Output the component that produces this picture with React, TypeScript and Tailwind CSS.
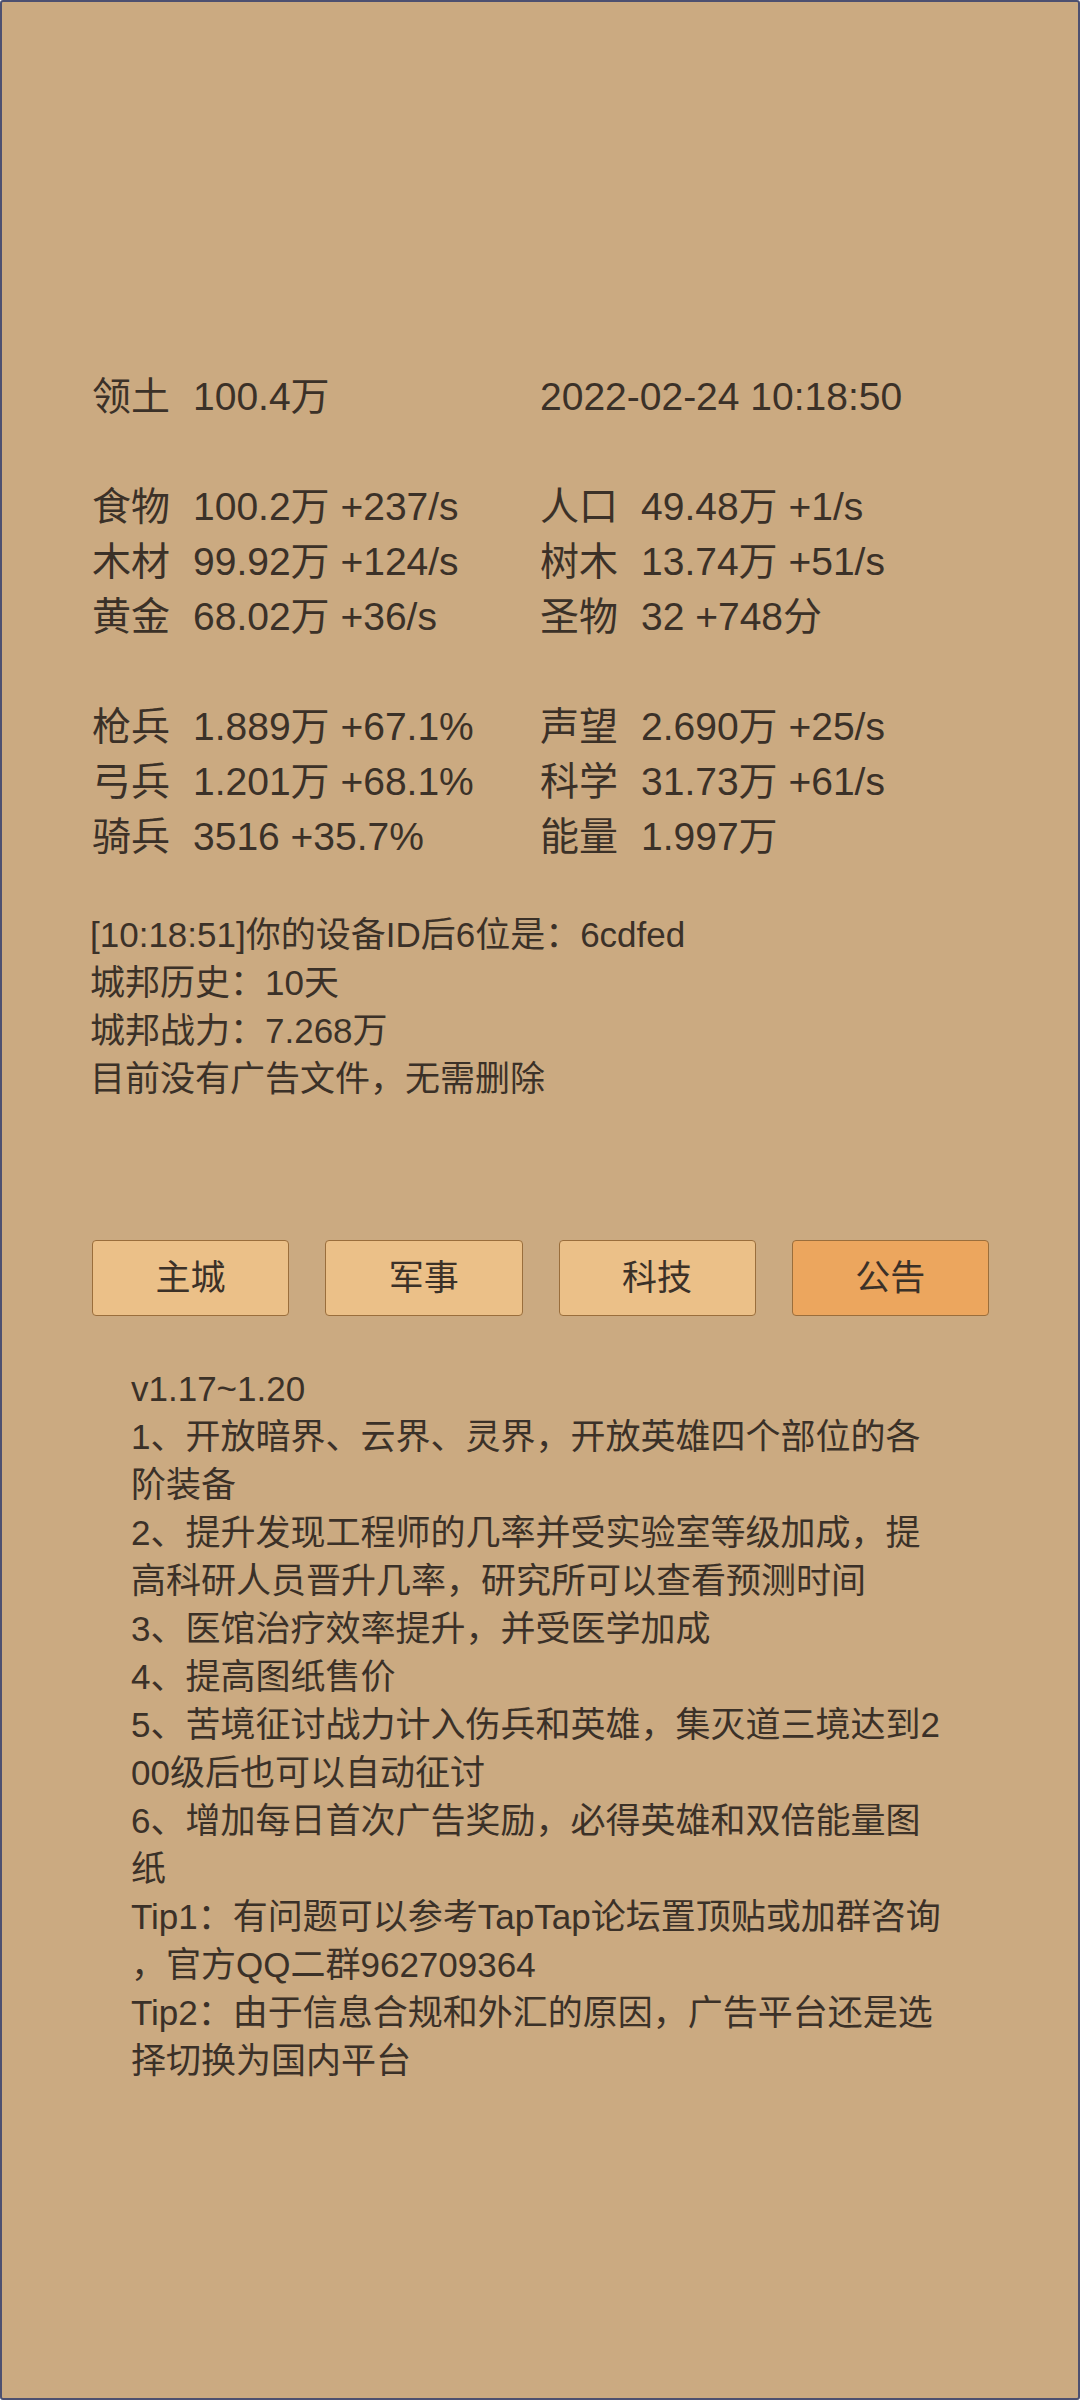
import React from 'react';

const font = { fontFamily: '"Liberation Sans", "Noto Sans CJK SC", sans-serif' };

type Stat = { label?: string; value: string };

const rows: [Stat, Stat][] = [
  [{ label: '食物', value: '100.2万 +237/s' }, { label: '人口', value: '49.48万 +1/s' }],
  [{ label: '木材', value: '99.92万 +124/s' }, { label: '树木', value: '13.74万 +51/s' }],
  [{ label: '黄金', value: '68.02万 +36/s' }, { label: '圣物', value: '32 +748分' }],
];

const army: [Stat, Stat][] = [
  [{ label: '枪兵', value: '1.889万 +67.1%' }, { label: '声望', value: '2.690万 +25/s' }],
  [{ label: '弓兵', value: '1.201万 +68.1%' }, { label: '科学', value: '31.73万 +61/s' }],
  [{ label: '骑兵', value: '3516 +35.7%' }, { label: '能量', value: '1.997万' }],
];

const info = [
  '[10:18:51]你的设备ID后6位是：6cdfed',
  '城邦历史：10天',
  '城邦战力：7.268万',
  '目前没有广告文件，无需删除',
];

const tabs = ['主城', '军事', '科技', '公告'];

const notice = [
  'v1.17~1.20',
  '1、开放暗界、云界、灵界，开放英雄四个部位的各阶装备',
  '2、提升发现工程师的几率并受实验室等级加成，提高科研人员晋升几率，研究所可以查看预测时间',
  '3、医馆治疗效率提升，并受医学加成',
  '4、提高图纸售价',
  '5、苦境征讨战力计入伤兵和英雄，集灭道三境达到200级后也可以自动征讨',
  '6、增加每日首次广告奖励，必得英雄和双倍能量图纸',
  'Tip1：有问题可以参考TapTap论坛置顶贴或加群咨询，官方QQ二群962709364',
  'Tip2：由于信息合规和外汇的原因，广告平台还是选择切换为国内平台',
];

function Cell({ stat }: { stat: Stat }) {
  return (
    <div className="flex whitespace-nowrap">
      {stat.label && <span className="w-[101px] shrink-0">{stat.label}</span>}
      <span>{stat.value}</span>
    </div>
  );
}

function StatRows({ data }: { data: [Stat, Stat][] }) {
  return (
    <>
      {data.map((r, i) => (
        <div key={i} className="grid grid-cols-[448px_1fr] h-[55px] items-center">
          <Cell stat={r[0]} />
          <Cell stat={r[1]} />
        </div>
      ))}
    </>
  );
}

export default function App() {
  return (
    <div
      style={font}
      className="w-[1080px] h-[2400px] bg-[#cbaa81] border-2 border-[#4d5070] rounded-[3px] text-[#3b3128] overflow-hidden"
    >
      <div className="pt-[367px] pl-[90px]">
        {/* stats */}
        <div className="text-[39px] leading-[55px]">
          <div className="grid grid-cols-[448px_1fr] h-[55px] items-center">
            <Cell stat={{ label: '领土', value: '100.4万' }} />
            <Cell stat={{ value: '2022-02-24 10:18:50' }} />
          </div>
          <div className="h-[55px]" />
          <StatRows data={rows} />
          <div className="h-[55px]" />
          <StatRows data={army} />
        </div>

        {/* log */}
        <div className="mt-[47px] -ml-[2px] text-[35px] leading-[48px]">
          {info.map((t) => (
            <div key={t} className="h-[48px] whitespace-nowrap">
              {t}
            </div>
          ))}
        </div>

        {/* tabs */}
        <div className="mt-[137px] w-[897px] grid grid-cols-4 gap-x-[36px]">
          {tabs.map((t) => (
            <div
              key={t}
              className={`h-[76px] flex items-center justify-center rounded-[4px] border-[1.5px] border-[#9a6e3c] text-[35px] ${
                t === '公告' ? 'bg-[#eca65e]' : 'bg-[#ebc088]'
              }`}
            >
              {t}
            </div>
          ))}
        </div>
      </div>

      {/* notice */}
      <div className="mt-[49px] pl-[129px] w-[951px] text-[35px] leading-[48px] [line-break:anywhere]">
        {notice.map((t) => (
          <div key={t}>{t}</div>
        ))}
      </div>
    </div>
  );
}
